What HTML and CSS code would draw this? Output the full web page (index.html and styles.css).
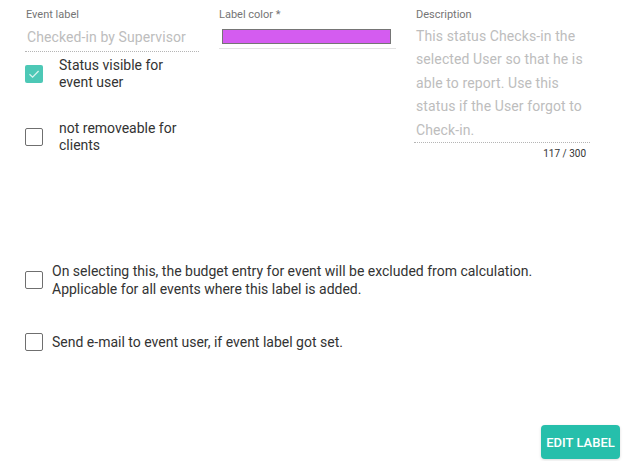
FILE: index.html
```html
<!DOCTYPE html>
<html>
<head>
<meta charset="utf-8">
<link rel="stylesheet" href="styles.css">
</head>
<body>
<div class="page">
  <div class="top">
    <div class="col col-label">
      <div class="field">
        <div class="flabel">Event label</div>
        <div class="fvalue dotted">Checked-in by Supervisor</div>
      </div>
      <div class="check-row first">
        <span class="box checked">
          <svg viewBox="0 0 18 18" width="18" height="18"><path d="M4.5 9.2 L7.6 12.2 L13.6 6" fill="none" stroke="#d8f3ee" stroke-width="1.3"/></svg>
        </span>
        <span class="ctext">Status visible for<br>event user</span>
      </div>
      <div class="check-row second">
        <span class="box"></span>
        <span class="ctext">not removeable for<br>clients</span>
      </div>
    </div>
    <div class="col col-color">
      <div class="flabel">Label color *</div>
      <div class="color-field">
        <div class="swatch"></div>
      </div>
    </div>
    <div class="col col-desc">
      <div class="flabel">Description</div>
      <div class="desc dotted">This status Checks-in the selected User so that he is able to report. Use this status if the User forgot to Check-in.</div>
      <div class="counter">117 / 300</div>
    </div>
  </div>
  <div class="opts">
    <div class="opt">
      <span class="box"></span>
      <span class="otext">On selecting this, the budget entry for event will be excluded from calculation.<br>Applicable for all events where this label is added.</span>
    </div>
    <div class="opt single">
      <span class="box"></span>
      <span class="otext">Send e-mail to event user, if event label got set.</span>
    </div>
  </div>
  <div class="actions">
    <button class="btn">EDIT LABEL</button>
  </div>
</div>
</body>
</html>
```

FILE: styles.css
```css
* { box-sizing: border-box; }
html, body { margin: 0; padding: 0; background: #fff; }
body {
  font-family: Roboto, "Noto Sans", "Liberation Sans", sans-serif;
  color: rgba(0,0,0,0.87);
  width: 624px;
  height: 461px;
  overflow: hidden;
}
.page {
  padding: 8px 4px 0 25px;
  display: flex;
  flex-direction: column;
  height: 461px;
}
.top {
  display: grid;
  grid-template-columns: 174px 177px 174px;
  column-gap: 20px;
}
.col { display: flex; flex-direction: column; }
.col-desc { margin-left: -2px; }
.flabel {
  font-size: 11px;
  line-height: 14px;
  color: #757575;
}
.col-label .flabel { padding-left: 1px; }
.col-desc .flabel { padding-left: 2px; }
.fvalue {
  font-size: 14px;
  line-height: 22px;
  color: #bdbdbd;
  padding: 4px 0 3px 2px;
  letter-spacing: 0.1px;
}
.dotted {
  border-bottom: 1px dotted #b5b5b5;
}
.check-row {
  display: flex;
  align-items: flex-start;
}
.check-row.first { margin-top: 5px; }
.check-row.second { margin-top: 29px; }
.box {
  flex: none;
  width: 18px;
  height: 18px;
  border: 1.5px solid #6f6f6f;
  border-radius: 2px;
  display: inline-flex;
  background: #fff;
}
.check-row .box { margin-top: 8px; }
.box.checked {
  background: #4dc8b6;
  border: none;
}
.ctext {
  font-size: 14px;
  line-height: 17px;
  margin-left: 16px;
  color: #333;
}
.color-field {
  margin-top: 7px;
  padding: 0 0 4px 3px;
  border-bottom: 1px solid #e3e3e3;
}
.swatch {
  width: 169px;
  height: 15px;
  background: #d45cf0;
  border: 1px solid #757575;
}
.desc {
  font-size: 14px;
  line-height: 23.4px;
  color: #bdbdbd;
  padding: 3px 0 0 2px;
  letter-spacing: 0.1px;
}
.counter {
  font-size: 10px;
  line-height: 12px;
  text-align: right;
  color: #333;
  margin-top: 5px;
  padding-right: 4px;
}
.opts {
  margin-top: 102px;
  display: flex;
  flex-direction: column;
}
.opt {
  display: flex;
  align-items: center;
}
.opt.single { margin-top: 35px; }
.otext {
  font-size: 14px;
  line-height: 18px;
  margin-left: 9px;
  color: #333;
}
.actions {
  margin-top: auto;
  display: flex;
  justify-content: flex-end;
  padding-bottom: 2px;
}
.btn {
  font-family: Roboto, "Noto Sans", sans-serif;
  font-size: 13px;
  font-weight: 500;
  color: #fff;
  background: #26bfab;
  border: none;
  border-radius: 4px;
  height: 34px;
  width: 79px;
  padding: 0;
  letter-spacing: 0;
  box-shadow: 0 1px 3px rgba(0,0,0,0.15);
}
```
